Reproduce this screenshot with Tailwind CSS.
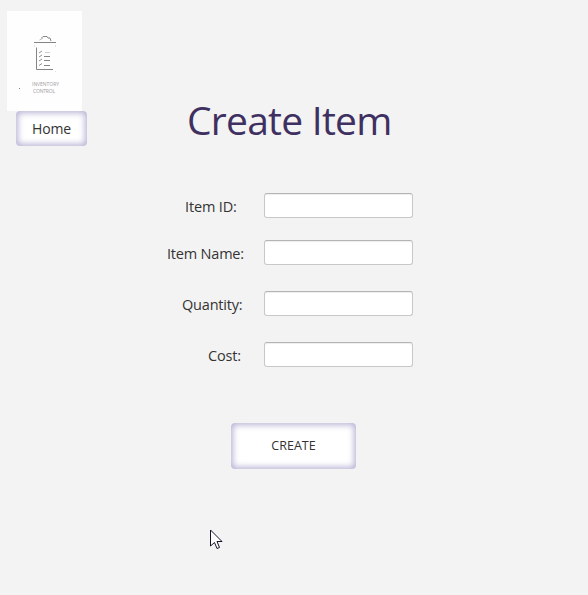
<!DOCTYPE html>
<html lang="en">
<head>
<meta charset="utf-8">
<title>Create Item</title>
<script src="https://cdn.jsdelivr.net/npm/@tailwindcss/browser@4"></script>
</head>
<body class="relative h-[595px] w-[588px] overflow-hidden bg-[#f3f3f3] font-['Open_Sans','Noto_Sans',sans-serif] text-[#333333]">
  <header class="flex h-[147px] pt-[11px] pl-[7px]">
    <div class="w-[180px] shrink-0">
      <svg class="block h-[100px] w-[75px] bg-[#fefefe]" viewBox="0 0 75 100" fill="none" stroke="#858585" stroke-width="1">
        <path d="M27 31.500H49"/>
        <path d="M32.500 29L36 27" stroke="#b5b5b5"/>
        <path d="M34.500 27L36 25.500H40L41 27H43L44 30"/>
        <path d="M29.500 36.500V58.500H46"/>
        <path d="M38 41.500H43" stroke="#ccc"/>
        <path d="M37 45.500H43M37 49.500H43M37 54.500H43"/>
        <path d="M32 42L35 40M32 46L35 44M32 50L35 48M32 54.500L35 52.500" stroke-width=".9"/>
        <path d="M48 60.500H49M27.500 34V36M48.500 34V36" stroke="#e2e2e2"/>
        <path d="M12 77.500H13"/>
        <g fill="#a0a0a0" stroke="none" font-family="Open Sans, sans-serif" font-size="5">
          <text x="25" y="75" textLength="27">INVENTORY</text>
          <text x="26" y="81.500" textLength="22">CONTROL</text>
        </g>
      </svg>
      <button class="ml-[9px] block h-[35px] w-[71px] rounded-[4px] bg-white text-[14px] leading-[35px] tracking-[-0.1px] shadow-[inset_0_0_6px_2px_#b9b3d5]">Home</button>
    </div>
    <h1 class="mt-[81px] text-[39px] leading-[56px] font-normal tracking-[-0.75px] whitespace-nowrap text-[#3e3060]">Create Item</h1>
  </header>
  <form class="mt-[46px] flex flex-col">
    <div class="flex h-[25px]"><label class="w-[264px] pt-px pl-[185px] text-[14.500px] leading-[25px] tracking-[-0.15px] whitespace-nowrap">Item ID:</label><input class="h-[25px] w-[149px] rounded-[3px] border border-[#c8c8c8] border-t-[#b4b4b4] bg-white shadow-[inset_0_1px_1px_#eeeeee]"></div>
    <div class="mt-[22px] flex h-[25px]"><label class="w-[264px] pt-px pl-[167px] text-[14.500px] leading-[25px] tracking-[-0.2px] whitespace-nowrap">Item Name:</label><input class="h-[25px] w-[149px] rounded-[3px] border border-[#c8c8c8] border-t-[#b4b4b4] bg-white shadow-[inset_0_1px_1px_#eeeeee]"></div>
    <div class="mt-[26px] flex h-[25px]"><label class="w-[264px] pt-px pl-[182px] text-[14.500px] leading-[25px] tracking-[-0.2px] whitespace-nowrap">Quantity:</label><input class="h-[25px] w-[149px] rounded-[3px] border border-[#c8c8c8] border-t-[#b4b4b4] bg-white shadow-[inset_0_1px_1px_#eeeeee]"></div>
    <div class="mt-[26px] flex h-[25px]"><label class="w-[264px] pt-px pl-[208px] text-[14.500px] leading-[25px] tracking-[-0.15px] whitespace-nowrap">Cost:</label><input class="h-[25px] w-[149px] rounded-[3px] border border-[#c8c8c8] border-t-[#b4b4b4] bg-white shadow-[inset_0_1px_1px_#eeeeee]"></div>
    <button type="button" class="mt-[56px] ml-[231px] h-[46px] w-[125px] rounded-[4px] bg-white text-[12.500px] tracking-[0.05px] shadow-[inset_0_0_6px_2px_#b9b3d5]">CREATE</button>
  </form>
  <svg class="absolute top-[529px] left-[210px] h-[22px] w-[14px]" viewBox="0 0 14 22" fill="white" stroke="#15152a" stroke-width="1">
    <path d="M.5 1V17L4.500 13.500L7 19.500L9.500 18.500L7 12.500H12Z"/>
  </svg>
</body>
</html>
